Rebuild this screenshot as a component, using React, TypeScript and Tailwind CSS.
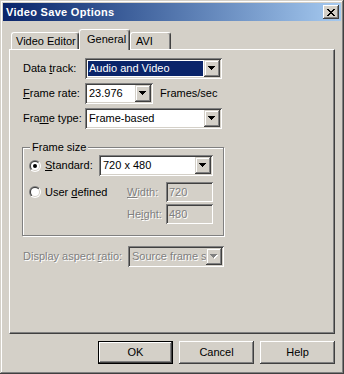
import React from "react";

const sunken =
  "shadow-[inset_1px_1px_0_#808080,inset_-1px_-1px_0_#ffffff,inset_2px_2px_0_#404040,inset_-2px_-2px_0_#d4d0c8]";
const arrowBtn =
  "shadow-[inset_-1px_-1px_0_#404040,inset_1px_1px_0_#d4d0c8,inset_-2px_-2px_0_#808080,inset_2px_2px_0_#ffffff]";
const pushBtn =
  "shadow-[inset_-1px_-1px_0_#404040,inset_1px_1px_0_#ffffff,inset_-2px_-2px_0_#808080,inset_2px_2px_0_#d4d0c8]";
const disabledText = "text-[#808080] [text-shadow:1px_1px_0_#ffffff]";

function Arrow({ disabled }: { disabled?: boolean }) {
  return (
    <svg width="8" height="5" viewBox="0 0 8 5" shapeRendering="crispEdges">
      {disabled && <polygon points="1,1 8,1 4.5,5" fill="#ffffff" />}
      <polygon points="0,0 7,0 3.5,4" fill={disabled ? "#808080" : "#000000"} />
    </svg>
  );
}

function Select({
  className,
  value,
  highlight,
  disabled,
}: {
  className: string;
  value: string;
  highlight?: boolean;
  disabled?: boolean;
}) {
  return (
    <div className={`flex h-[21px] p-[2px] ${disabled ? "bg-[#d4d0c8]" : "bg-white"} ${sunken} ${className}`}>
      <div className="flex min-w-0 flex-1 overflow-hidden">
        {highlight ? (
          <div className="m-[1px] flex flex-1 items-center bg-[#0a246a] pl-[1px] text-white whitespace-nowrap">
            {value}
          </div>
        ) : (
          <div
            className={`flex flex-1 items-center pl-[2px] whitespace-nowrap overflow-hidden ${disabled ? disabledText : "text-black"}`}
          >
            {value}
          </div>
        )}
      </div>
      <div className={`flex h-[17px] w-[16px] shrink-0 items-center justify-center bg-[#d4d0c8] ${arrowBtn}`}>
        <Arrow disabled={disabled} />
      </div>
    </div>
  );
}

function Edit({ className, value }: { className: string; value: string }) {
  return (
    <div className={`flex h-[20px] items-center bg-[#d4d0c8] pl-[3px] ${sunken} ${className} ${disabledText}`}>
      {value}
    </div>
  );
}

function Radio({ checked, id }: { checked?: boolean; id: string }) {
  return (
    <svg width="12" height="12" viewBox="0 0 12 12" className="shrink-0">
      <defs>
        <linearGradient id={`o${id}`} x1="0" y1="0" x2="1" y2="1">
          <stop offset="0.5" stopColor="#808080" />
          <stop offset="0.5" stopColor="#ffffff" />
        </linearGradient>
        <linearGradient id={`i${id}`} x1="0" y1="0" x2="1" y2="1">
          <stop offset="0.5" stopColor="#404040" />
          <stop offset="0.5" stopColor="#d4d0c8" />
        </linearGradient>
      </defs>
      <circle cx="6" cy="6" r="6" fill={`url(#o${id})`} />
      <circle cx="6" cy="6" r="5" fill={`url(#i${id})`} />
      <circle cx="6" cy="6" r="4" fill="#ffffff" />
      {checked && <circle cx="6" cy="6" r="2" fill="#000000" />}
    </svg>
  );
}

function Tab({ label, selected, className }: { label: string; selected?: boolean; className: string }) {
  return (
    <div
      className={`flex items-center whitespace-nowrap rounded-t-[3px] border-l border-t border-r border-l-white border-t-white border-r-[#404040] bg-[#d4d0c8] shadow-[inset_-1px_0_0_#808080] ${
        selected ? "relative z-10 -mb-[1px] h-[21px] pb-[2px]" : "h-[17px] pt-[1px]"
      } ${className}`}
    >
      {label}
    </div>
  );
}

function Button({ label, isDefault }: { label: string; isDefault?: boolean }) {
  return (
    <div
      className={`flex h-[23px] w-[75px] items-center justify-center bg-[#d4d0c8] ${
        isDefault
          ? "border border-black shadow-[inset_-1px_-1px_0_#404040,inset_1px_1px_0_#ffffff,inset_-2px_-2px_0_#808080]"
          : pushBtn
      }`}
    >
      {label}
    </div>
  );
}

export default function App() {
  return (
    <div className="h-[374px] w-[344px] overflow-hidden bg-[#d4d0c8] p-[3px] font-['Liberation_Sans',Arial,sans-serif] text-[11px] leading-[13px] text-black shadow-[inset_-1px_-1px_0_#404040,inset_1px_1px_0_#d4d0c8,inset_-2px_-2px_0_#808080,inset_2px_2px_0_#ffffff]">
      {/* Title bar */}
      <div className="flex h-[18px] items-center justify-between bg-linear-to-r from-[#0a246a] to-[#a6caf0] pl-[3px] pr-[2px]">
        <span className="text-[11px] font-bold tracking-[0.3px] text-white">Video Save Options</span>
        <div className={`flex h-[14px] w-[16px] items-center justify-center bg-[#d4d0c8] ${pushBtn}`}>
          <svg width="8" height="7" viewBox="0 0 8 7" shapeRendering="crispEdges">
            <path
              d="M0 0h2v1h-2zM6 0h2v1h-2zM1 1h2v1h-2zM5 1h2v1h-2zM2 2h4v1h-4zM3 3h2v1h-2zM2 4h4v1h-4zM1 5h2v1h-2zM5 5h2v1h-2zM0 6h2v1h-2zM6 6h2v1h-2z"
              fill="#000"
            />
          </svg>
        </div>
      </div>

      {/* Body */}
      <div className="pl-[6px] pt-[8px]">
        {/* Tabs */}
        <div className="flex h-[20px] items-end pl-[2px]">
          <Tab label="Video Editor" className="w-[68px] pl-[4px]" />
          <Tab label="General" selected className="w-[51px] pl-[7px]" />
          <Tab label="AVI" className="w-[41px] pl-[5px]" />
        </div>

        {/* Panel */}
        <div className="h-[285px] w-[326px] border border-t-white border-l-white border-r-[#404040] border-b-[#404040] pl-[13px] pt-[8px] shadow-[inset_-1px_-1px_0_#808080]">
          <div className="flex h-[21px] items-center">
            <div className="w-[62px]">
              Data <span className="underline">t</span>rack:
            </div>
            <Select className="w-[137px]" value="Audio and Video" highlight />
          </div>
          <div className="mt-[4px] flex h-[21px] items-center">
            <div className="w-[62px]">
              <span className="underline">F</span>rame rate:
            </div>
            <Select className="w-[68px]" value="23.976" />
            <div className="ml-[7px]">Frames/sec</div>
          </div>
          <div className="mt-[4px] flex h-[21px] items-center">
            <div className="w-[62px]">
              Fra<span className="underline">m</span>e type:
            </div>
            <Select className="w-[137px]" value="Frame-based" />
          </div>

          {/* Group box */}
          <div className="relative mt-[18px] -ml-[1px] h-[89px] w-[202px] border border-[#808080] pl-[6px] pt-[7px] shadow-[inset_1px_1px_0_#ffffff,1px_1px_0_#ffffff]">
            <div className="absolute -top-[7px] left-[7px] bg-[#d4d0c8] px-[2px]">Frame size</div>
            <div className="flex h-[21px] items-center">
              <Radio checked id="a" />
              <div className="ml-[4px] w-[54px]">
                <span className="underline">S</span>tandard:
              </div>
              <Select className="w-[114px]" value="720 x 480" />
            </div>
            <div className="mt-[6px] flex h-[20px] items-center">
              <Radio id="b" />
              <div className="ml-[4px] w-[82px]">
                User <span className="underline">d</span>efined
              </div>
              <div className={`w-[39px] ${disabledText}`}>
                <span className="underline">W</span>idth:
              </div>
              <Edit className="w-[47px]" value="720" />
            </div>
            <div className="mt-[2px] flex h-[20px] items-center pl-[98px]">
              <div className={`w-[39px] ${disabledText}`}>
                He<span className="underline">i</span>ght:
              </div>
              <Edit className="w-[47px]" value="480" />
            </div>
          </div>

          <div className="mt-[10px] flex h-[21px] items-center">
            <div className={`w-[105px] ${disabledText}`}>
              Display aspect <span className="underline">r</span>atio:
            </div>
            <Select className="w-[96px]" value="Source frame size" disabled />
          </div>
        </div>

        {/* Buttons */}
        <div className="mt-[7px] flex w-[326px] justify-end gap-[6px]">
          <Button label="OK" isDefault />
          <Button label="Cancel" />
          <Button label="Help" />
        </div>
      </div>
    </div>
  );
}
